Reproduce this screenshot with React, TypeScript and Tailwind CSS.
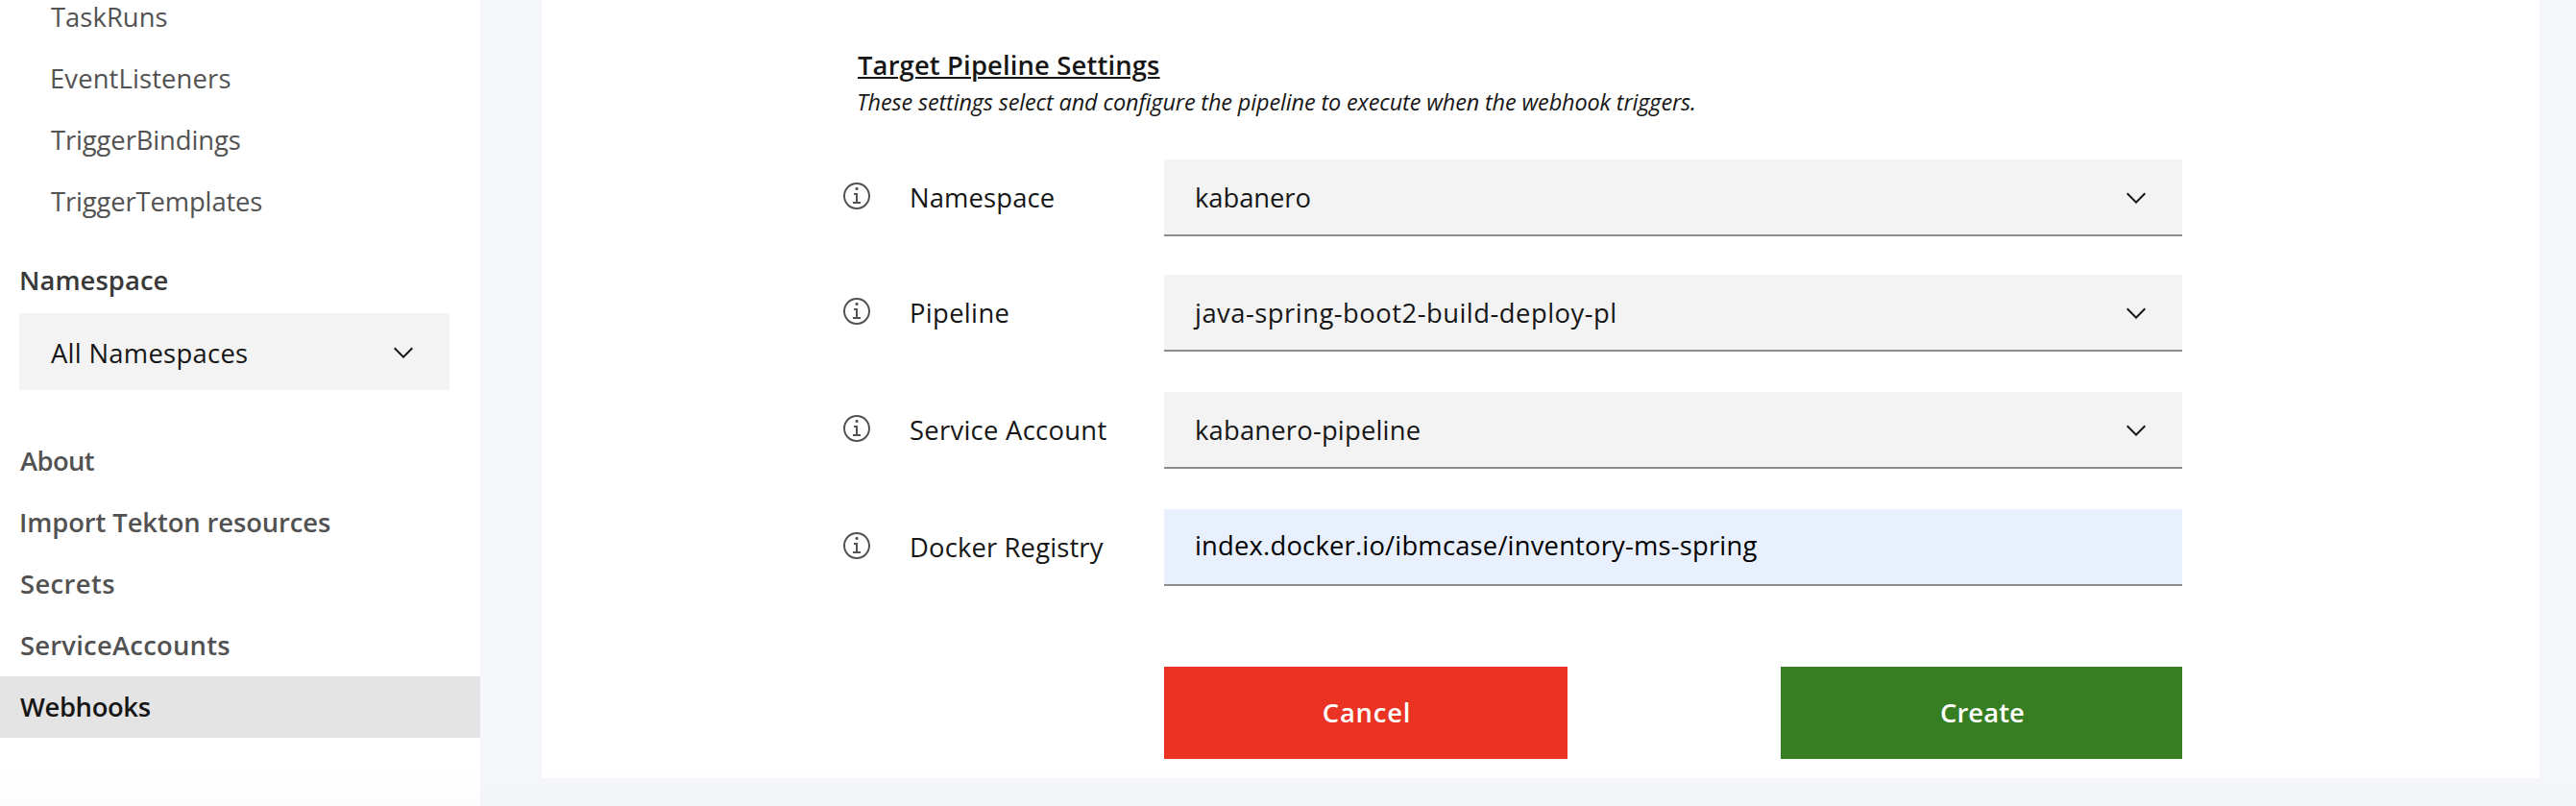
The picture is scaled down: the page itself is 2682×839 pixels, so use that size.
type TextItem = { text: string; style: string };

const resources: TextItem[] = [
  { text: "TaskRuns", style: "h-[50px] leading-[35px] tracking-[0.05px] pl-[53px]" },
  { text: "EventListeners", style: "h-16 leading-[63px] tracking-[0.15px] pl-[52px]" },
  { text: "TriggerBindings", style: "h-16 leading-[63px] tracking-[-0.1px] pl-[53px]" },
  { text: "TriggerTemplates", style: "h-16 leading-[63px] tracking-[-0.12px] pl-[53px]" },
];

const links: TextItem[] = [
  { text: "About", style: "text-[#525252] tracking-[-0.6px] pl-[21px]" },
  { text: "Import Tekton resources", style: "text-[#525252] tracking-[-0.09px] pl-5" },
  { text: "Secrets", style: "text-[#525252] tracking-[0.4px] pl-[21px]" },
  { text: "ServiceAccounts", style: "text-[#525252] tracking-[0.25px] pl-[21px]" },
  { text: "Webhooks", style: "bg-[#e4e4e4] text-[#161616] tracking-[-0.35px] pl-[21px]" },
];

type Field = { label: string; labelStyle: string; value: string; valueStyle: string; rowStyle: string; select: boolean };

const fields: Field[] = [
  {
    label: "Namespace", labelStyle: "tracking-[0.15px]",
    value: "kabanero", valueStyle: "bg-[#f3f3f3] leading-[79px] tracking-[-0.05px]",
    rowStyle: "mt-[42px]", select: true,
  },
  {
    label: "Pipeline", labelStyle: "tracking-[0.35px]",
    value: "java-spring-boot2-build-deploy-pl", valueStyle: "bg-[#f3f3f3] leading-[79px] tracking-[0.5px]",
    rowStyle: "mt-10", select: true,
  },
  {
    label: "Service Account", labelStyle: "tracking-[0.3px]",
    value: "kabanero-pipeline", valueStyle: "bg-[#f3f3f3] leading-[79px] tracking-[0.2px]",
    rowStyle: "mt-[42px]", select: true,
  },
  {
    label: "Docker Registry", labelStyle: "tracking-[0.16px]",
    value: "index.docker.io/ibmcase/inventory-ms-spring", valueStyle: "bg-[#e8effd] text-black leading-[75px] tracking-[0.2px]",
    rowStyle: "mt-[42px]", select: false,
  },
];

function Chevron({ className }: { className: string }) {
  return (
    <svg viewBox="0 0 16 16" className={`size-8 shrink-0 fill-[#161616] ${className}`} aria-hidden="true">
      <path d="M8 11L3 6 3.7 5.3 8 9.6 12.3 5.3 13 6z" />
    </svg>
  );
}

function InfoIcon() {
  return (
    <svg viewBox="0 0 16 16" className="mt-[22px] size-8 shrink-0 fill-[#525252]" aria-hidden="true">
      <path d="M8.5 11V6.5h-2v1h1V11H6v1h4v-1zM8 3.5c-.4 0-.8.3-.8.8S7.6 5 8 5s.8-.3.8-.8-.4-.8-.8-.8z" />
      <path d="M8 15c-3.9 0-7-3.1-7-7s3.1-7 7-7 7 3.1 7 7-3.1 7-7 7zM8 2C4.7 2 2 4.7 2 8s2.7 6 6 6 6-2.7 6-6-2.7-6-6-6z" />
    </svg>
  );
}

function Sidebar() {
  return (
    <aside className="w-[500px] shrink-0 bg-white">
      <nav className="text-[#525252]">
        {resources.map((item) => (
          <a key={item.text} className={`block ${item.style}`}>{item.text}</a>
        ))}
      </nav>
      <div className="h-[84px] pt-[30px] pl-5 leading-[39px] font-semibold tracking-[0.07px] text-[#393939]">Namespace</div>
      <button className="ml-5 flex h-20 w-[448px] items-start justify-between bg-[#f3f3f3] pr-8 pl-[33px] text-left leading-[83px] tracking-[0.3px]">
        <span>All Namespaces</span>
        <Chevron className="mt-[25px]" />
      </button>
      <nav className="mt-[42px] font-semibold">
        {links.map((item) => (
          <a key={item.text} className={`block h-16 leading-[63px] ${item.style}`}>{item.text}</a>
        ))}
      </nav>
    </aside>
  );
}

function FormRow({ field }: { field: Field }) {
  return (
    <div className={`flex h-20 items-start ${field.rowStyle}`}>
      <InfoIcon />
      <label className={`w-[304px] shrink-0 pl-[39px] leading-[79px] whitespace-nowrap ${field.labelStyle}`}>{field.label}</label>
      <div className={`flex h-20 w-[1060px] items-start justify-between border-b-2 border-[#8d8d8d] pr-8 pl-8 ${field.valueStyle}`}>
        <span>{field.value}</span>
        {field.select && <Chevron className="mt-6" />}
      </div>
    </div>
  );
}

export default function App() {
  return (
    <div className="relative flex h-[839px] w-[2682px] overflow-hidden bg-[#f5f7fb] font-['Open_Sans','Noto_Sans',sans-serif] text-[27.37px] text-[#161616]">
      <Sidebar />
      <main className="ml-16 h-[810px] w-[2080px] bg-white pt-12 pl-[312px]">
        <h2 className="pl-[17px] leading-[39px] font-semibold tracking-[0.16px] underline decoration-2 underline-offset-2">Target Pipeline Settings</h2>
        <p className="pt-px pl-4 text-[23.46px] leading-9 tracking-[-0.14px] italic">
          These settings select and configure the pipeline to execute when the webhook triggers.
        </p>
        <form>
          {fields.map((field) => <FormRow key={field.label} field={field} />)}
          <div className="mt-[84px] ml-[336px] flex w-[1060px] justify-between leading-[95px] font-semibold text-white">
            <button type="button" className="flex h-24 w-[420px] justify-center bg-[#ea3323] pl-0.5 tracking-[0.81px]">Cancel</button>
            <button type="button" className="flex h-24 w-[418px] justify-center bg-[#377e22] pl-0.5 tracking-[0.08px]">Create</button>
          </div>
        </form>
      </main>
      <div className="pointer-events-none absolute inset-x-0 bottom-0 h-12 bg-linear-to-b from-transparent to-black/1" />
    </div>
  );
}
